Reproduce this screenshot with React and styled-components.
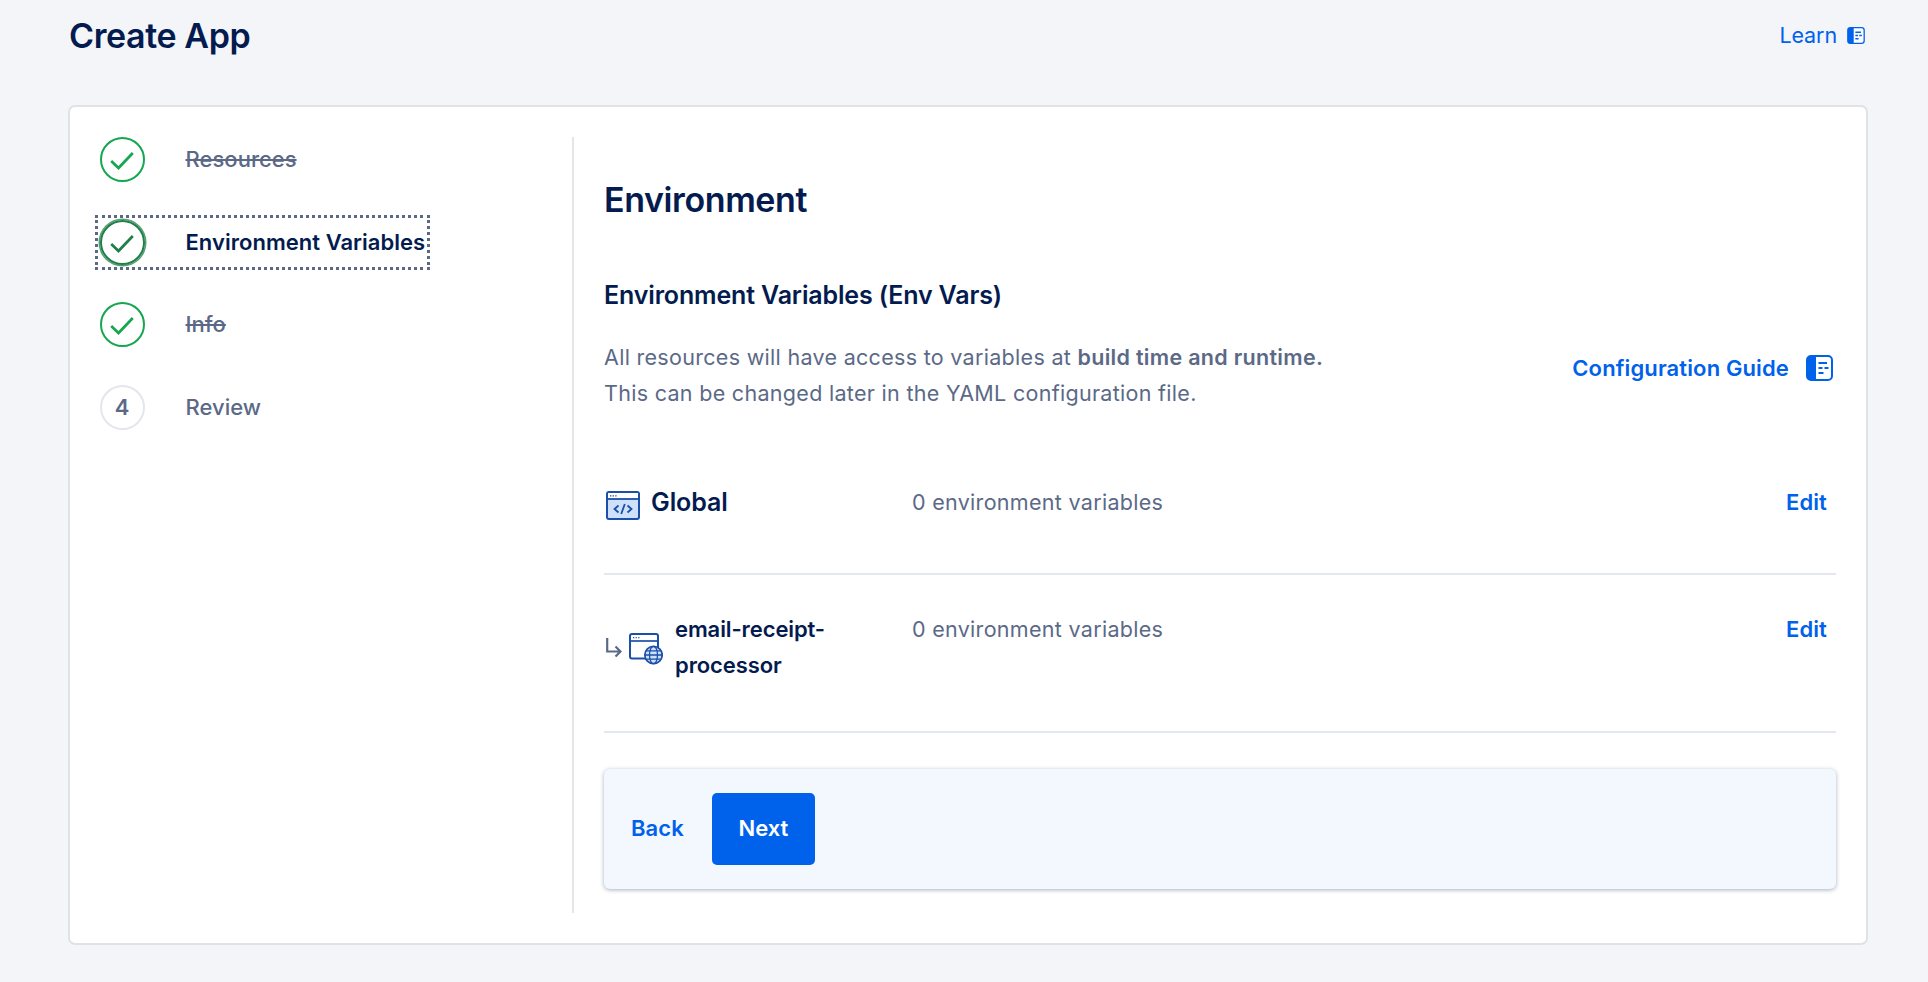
import React from "react";
import styled, { createGlobalStyle } from "styled-components";

const navy = "#031b4e";
const gray = "#5b6987";
const blue = "#0061eb";
const green = "#15a650";
const iconBlue = "#1b4fa8";

const Global = createGlobalStyle`
  html, body { margin: 0; padding: 0; background: #f3f5f9; }
  body { font-family: "Inter", "Liberation Sans", sans-serif; color: ${navy}; -webkit-font-smoothing: antialiased; }
`;

const Page = styled.div`
  height: 982px;
  padding: 0 60px 0 68px;
  box-sizing: border-box;
  overflow: hidden;
`;
const Header = styled.header`
  height: 105px;
  display: flex;
  justify-content: space-between;
  align-items: flex-start;
  padding: 16px 3px 0 1px;
  box-sizing: border-box;
`;
const Title = styled.h1`
  margin: 0;
  font-size: 34px;
  line-height: 40px;
  font-weight: 600;
  letter-spacing: -0.4px;
`;
const LearnLink = styled.a`
  display: flex;
  align-items: center;
  gap: 10px;
  margin-top: -1px;
  font-size: 21.5px;
  line-height: 40px;
  font-weight: 400;
  color: ${blue};
  letter-spacing: -0.1px;
`;
const Card = styled.section`
  height: 840px;
  width: 1800px;
  box-sizing: border-box;
  background: #fff;
  border: 2px solid #e0e2e6;
  border-radius: 7px;
  padding: 30px;
  display: flex;
`;
const Sidebar = styled.nav`
  width: 472px;
  flex: none;
  border-right: 2px solid #e4e6ea;
  display: flex;
  flex-direction: column;
  align-items: flex-start;
  gap: 37.5px;
`;
const Step = styled.div`
  display: flex;
  align-items: center;
  gap: 41px;
  height: 45px;
  margin-left: -0.5px;
  outline: ${(p) => (p.$focused ? `3px dotted ${gray}` : "none")};
  outline-offset: 2.5px;
`;
const Circle = styled.div`
  width: 45px;
  height: 45px;
  box-sizing: border-box;
  flex: none;
  border-radius: 50%;
  border: 2px solid ${(p) => (p.$focused ? "#1e7f48" : p.$todo ? "#e4e6ec" : green)};
  display: flex;
  align-items: center;
  justify-content: center;
  color: ${gray};
  font-size: 22px;
  font-weight: 600;
  box-shadow: ${(p) => (p.$focused ? "0 0 0 1.5px rgba(30, 127, 72, 0.75)" : "none")};
`;
const StepLabel = styled.span`
  font-size: 22px;
  line-height: 36px;
  margin-bottom: ${(p) => (p.$done ? "2px" : "0")};
  font-weight: ${(p) => (p.$active ? 600 : 500)};
  letter-spacing: 0.03px;
  white-space: nowrap;
  color: ${(p) => (p.$active ? navy : gray)};
  text-decoration: ${(p) => (p.$done ? "line-through" : "none")};
`;
const Main = styled.main`
  flex: 1;
  min-width: 0;
  padding-left: 30px;
  display: flex;
  flex-direction: column;
`;
const Heading = styled.h2`
  margin: 43px 0 0;
  font-size: 34px;
  line-height: 40px;
  font-weight: 600;
  letter-spacing: -0.4px;
`;
const Subheading = styled.h3`
  margin: 59px 0 0;
  font-size: 25px;
  line-height: 32px;
  font-weight: 600;
  letter-spacing: -0.15px;
`;
const Intro = styled.div`
  margin-top: 28px;
  display: flex;
  justify-content: space-between;
  align-items: flex-start;
`;
const Paragraph = styled.p`
  margin: 0;
  font-size: 21.5px;
  line-height: 36px;
  color: ${gray};
  letter-spacing: 0.3px;
  strong { font-weight: 600; }
`;
const GuideLink = styled.a`
  margin-top: 11px;
  display: flex;
  align-items: center;
  gap: 17px;
  padding-right: 3px;
  font-size: 22px;
  line-height: 36px;
  font-weight: 600;
  color: ${blue};
  letter-spacing: 0.13px;
`;
const Row = styled.div`
  display: flex;
  align-items: flex-start;
  padding: ${(p) => p.$pad};
  padding-right: 9px;
  border-bottom: 2px solid #e3e8ef;
`;
const NameCol = styled.div`
  width: 308px;
  flex: none;
  display: flex;
  align-items: ${(p) => (p.$center ? "center" : "flex-start")};
  padding-left: 2px;
  box-sizing: border-box;
`;
const RowName = styled.span`
  font-size: ${(p) => (p.$big ? "25px" : "22px")};
  line-height: 36px;
  font-weight: 600;
  letter-spacing: -0.1px;
  max-width: 170px;
`;
const Value = styled.span`
  flex: 1;
  font-size: 21.5px;
  line-height: 36px;
  color: ${gray};
  letter-spacing: 0.3px;
`;
const EditLink = styled.a`
  font-size: 22px;
  line-height: 36px;
  font-weight: 600;
  color: ${blue};
  letter-spacing: 0.1px;
`;
const IconSlot = styled.span`
  display: flex;
  flex: none;
  margin: ${(p) => p.$m};
`;
const Footer = styled.div`
  margin-top: 36px;
  height: 120px;
  box-sizing: border-box;
  background: #f3f7fe;
  border-radius: 6px;
  padding: 24px 27px;
  display: flex;
  align-items: center;
  gap: 28px;
  box-shadow: 0 1px 4px rgba(3, 27, 78, 0.35);
`;
const BackLink = styled.a`
  margin-top: -2px;
  font-size: 22px;
  font-weight: 600;
  color: ${blue};
  letter-spacing: 0.1px;
`;
const NextButton = styled.button`
  width: 103px;
  height: 72px;
  border: 0;
  padding: 0 0 2px;
  border-radius: 5px;
  background: ${blue};
  color: #fff;
  font-family: inherit;
  font-size: 22px;
  font-weight: 600;
  letter-spacing: 0;
`;

const Check = ({ color }) => (
  <svg width="24" height="18" viewBox="0 0 24 18" fill="none" style={{ marginTop: 3 }}>
    <path d="M1.2 9 L8.5 16 L22.8 1" stroke={color} strokeWidth="2.7" />
  </svg>
);
const BookIcon = ({ h, w }) => (
  <svg width={w} height={h} viewBox="0 0 27 26" fill="none">
    <rect x="1" y="1" width="25" height="24" rx="4" fill="#fff" stroke={blue} strokeWidth="2" />
    <path d="M5 1 H10 V25 H5 A4 4 0 0 1 1 21 V5 A4 4 0 0 1 5 1 Z" fill={blue} />
    <path d="M12.5 8 H21 M12.5 13 H16.5 M18.5 13 H22.5 M12.5 18 H17.5" stroke={blue} strokeWidth="2" />
  </svg>
);
const CodeIcon = () => (
  <svg width="34" height="29" viewBox="0 0 34 29" fill="none">
    <rect x="1" y="1" width="32" height="27" rx="2" fill="#cfe0fb" stroke={iconBlue} strokeWidth="2" />
    <rect x="2" y="2" width="30" height="5.5" fill="#fff" />
    <path d="M1 8 H33" stroke={iconBlue} strokeWidth="1.8" />
    <path d="M4 4.8 H5.4 M6.6 4.8 H8 M9.2 4.8 H10.6" stroke={iconBlue} strokeWidth="1.3" />
    <path d="M12.5 14.5 L8.5 18 L12.5 21.5 M21.5 14.5 L25.5 18 L21.5 21.5 M18.8 13 L15.2 23" stroke={iconBlue} strokeWidth="1.8" />
  </svg>
);
const ReturnArrow = () => (
  <svg width="16" height="20" viewBox="0 0 16 20" fill="none">
    <path d="M1.2 0 V13.5 H14 M9.5 8.5 L14.5 13.5 L9.5 18.5" stroke={gray} strokeWidth="2.2" />
  </svg>
);
const WebIcon = () => (
  <svg width="34" height="32" viewBox="0 0 34 32" fill="none">
    <path d="M19 25.5 H3 A2 2 0 0 1 1 23.5 V3 A2 2 0 0 1 3 1 H27 A2 2 0 0 1 29 3 V15" stroke={iconBlue} strokeWidth="2" />
    <path d="M1 8 H29" stroke={iconBlue} strokeWidth="1.7" />
    <path d="M4 4.6 H5.2 M6.6 4.6 H7.8 M9.2 4.6 H10.4" stroke={iconBlue} strokeWidth="1.3" />
    <circle cx="24.5" cy="22" r="8.7" fill="#cfe0fb" stroke={iconBlue} strokeWidth="1.7" />
    <ellipse cx="24.5" cy="22" rx="4" ry="8.7" stroke={iconBlue} strokeWidth="1.3" />
    <path d="M16 22 H33 M17.5 17.8 H31.5 M17.5 26.2 H31.5" stroke={iconBlue} strokeWidth="1.3" />
  </svg>
);

const steps = [
  { label: "Resources", done: true },
  { label: "Environment Variables", done: false, active: true },
  { label: "Info", done: true },
  { label: "Review", num: 4 },
];

export default function App() {
  return (
    <>
      <Global />
      <Page>
        <Header>
          <Title>Create App</Title>
          <LearnLink>
            Learn
            <BookIcon h={17} w={18} />
          </LearnLink>
        </Header>
        <Card>
          <Sidebar>
            {steps.map((s) => (
              <Step key={s.label} $focused={s.active}>
                <Circle $todo={!!s.num} $focused={s.active}>
                  {s.num ? s.num : <Check color={s.active ? "#1e7f48" : green} />}
                </Circle>
                <StepLabel $active={s.active} $done={s.done}>{s.label}</StepLabel>
              </Step>
            ))}
          </Sidebar>
          <Main>
            <Heading>Environment</Heading>
            <Subheading>Environment Variables (Env Vars)</Subheading>
            <Intro>
              <Paragraph>
                All resources will have access to variables at <strong>build time and runtime.</strong>
                <br />
                This can be changed later in the YAML configuration file.
              </Paragraph>
              <GuideLink>
                Configuration Guide
                <BookIcon h={26} w={27} />
              </GuideLink>
            </Intro>
            <Row $pad="73px 0 53px">
              <NameCol>
                <IconSlot $m="7px 11px 0 0"><CodeIcon /></IconSlot>
                <RowName $big>Global</RowName>
              </NameCol>
              <Value>0 environment variables</Value>
              <EditLink>Edit</EditLink>
            </Row>
            <Row $pad="36px 0 48px">
              <NameCol $center>
                <IconSlot $m="2px 7px 0 0"><ReturnArrow /></IconSlot>
                <IconSlot $m="4px 12px 0 0"><WebIcon /></IconSlot>
                <RowName>email-receipt-processor</RowName>
              </NameCol>
              <Value>0 environment variables</Value>
              <EditLink>Edit</EditLink>
            </Row>
            <Footer>
              <BackLink>Back</BackLink>
              <NextButton>Next</NextButton>
            </Footer>
          </Main>
        </Card>
      </Page>
    </>
  );
}
